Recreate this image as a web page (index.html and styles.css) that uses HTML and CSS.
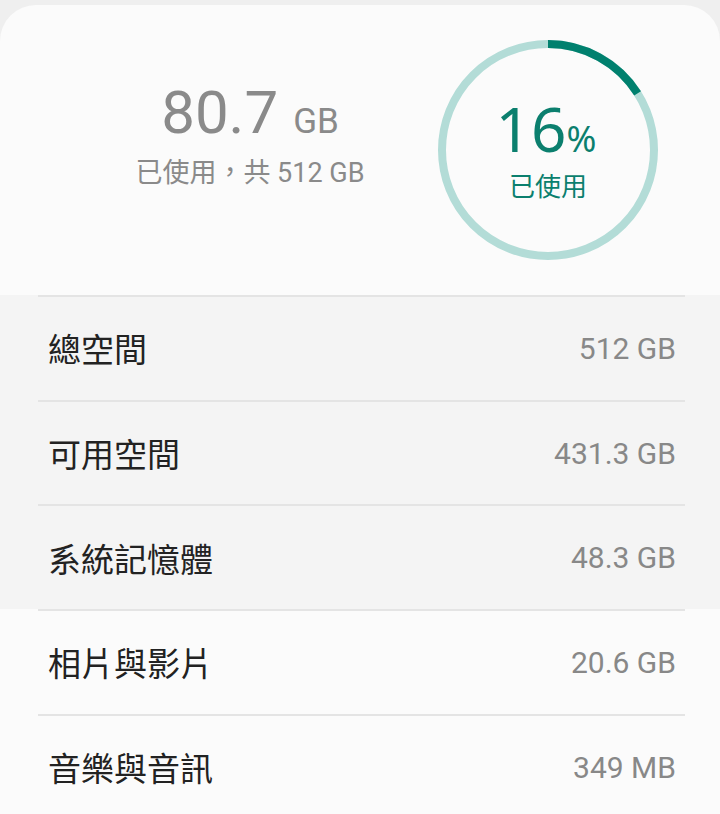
FILE: index.html
```html
<!DOCTYPE html>
<html lang="zh-Hant">
<head>
  <meta charset="UTF-8">
  <meta name="viewport" content="width=device-width, initial-scale=1.0">
  <title>儲存空間</title>
  <link rel="stylesheet" href="styles.css">
</head>
<body>
  <div class="card">
    <section class="summary">
      <div class="used">
        <div class="used-amount">80.7<span class="unit">GB</span></div>
        <div class="used-total">已使用，共 512 GB</div>
      </div>
      <div class="ring">
        <svg viewBox="0 0 220 220" width="220" height="220">
          <circle class="ring-track" cx="110" cy="110" r="106"></circle>
          <circle class="ring-fill" cx="110" cy="110" r="106" stroke-dasharray="106.6 666"></circle>
        </svg>
        <div class="ring-percent">16<span class="pct">%</span></div>
        <div class="ring-label">已使用</div>
      </div>
    </section>

    <div class="list highlighted">
      <div class="row"><span class="name">總空間</span><span class="size">512 GB</span></div>
      <div class="row"><span class="name">可用空間</span><span class="size">431.3 GB</span></div>
      <div class="row"><span class="name">系統記憶體</span><span class="size">48.3 GB</span></div>
    </div>
    <div class="list">
      <div class="row"><span class="name">相片與影片</span><span class="size">20.6 GB</span></div>
      <div class="row"><span class="name">音樂與音訊</span><span class="size">349 MB</span></div>
    </div>
  </div>
</body>
</html>
```

FILE: styles.css
```css
body {
  margin: 0;
  padding: 0;
  background-color: #efefef;
  font-family: Roboto, "Noto Sans CJK TC", sans-serif;
  overflow: hidden;
}

.card {
  margin-top: 5px;
  background-color: #fbfbfb;
  border-radius: 36px 36px 0 0;
  min-height: 809px;
}

.summary {
  display: flex;
  align-items: center;
  padding: 35px 62px;
}

.used {
  flex: 1;
  text-align: center;
  color: #8a8a8a;
  padding-bottom: 30px;
}

.used-amount {
  font-size: 60px;
  line-height: 64px;
}

.used-amount .unit {
  font-size: 35px;
  margin-left: 15px;
}

.used-total {
  font-size: 27px;
  line-height: 34px;
  margin-top: 2px;
}

.ring {
  position: relative;
  width: 220px;
  height: 220px;
  display: flex;
  flex-direction: column;
  align-items: center;
  justify-content: center;
  color: #0b7f6e;
}

.ring svg {
  position: absolute;
  top: 0;
  left: 0;
  transform: rotate(-90deg);
}

.ring circle {
  fill: none;
  stroke-width: 8;
}

.ring-track {
  stroke: #b3dcd7;
}

.ring-fill {
  stroke: #00806e;
}

.ring-percent {
  position: relative;
  font-family: "Noto Sans", sans-serif;
  font-size: 62px;
  line-height: 62px;
  margin-top: -2px;
  margin-left: -4px;
}

.ring-percent .pct {
  font-size: 36px;
  margin-left: 0;
}

.ring-label {
  position: relative;
  font-size: 26px;
  line-height: 30px;
  margin-top: 2px;
}

.highlighted {
  background-color: #f4f4f4;
}

.row {
  display: flex;
  justify-content: space-between;
  align-items: center;
  height: 102.7px;
  margin: 0 35px 0 38px;
  padding: 0 9px 0 10px;
  border-top: 2px solid #e4e4e4;
}

.name {
  font-size: 33px;
  color: #222;
}

.size {
  font-size: 30px;
  color: #888;
}
```
